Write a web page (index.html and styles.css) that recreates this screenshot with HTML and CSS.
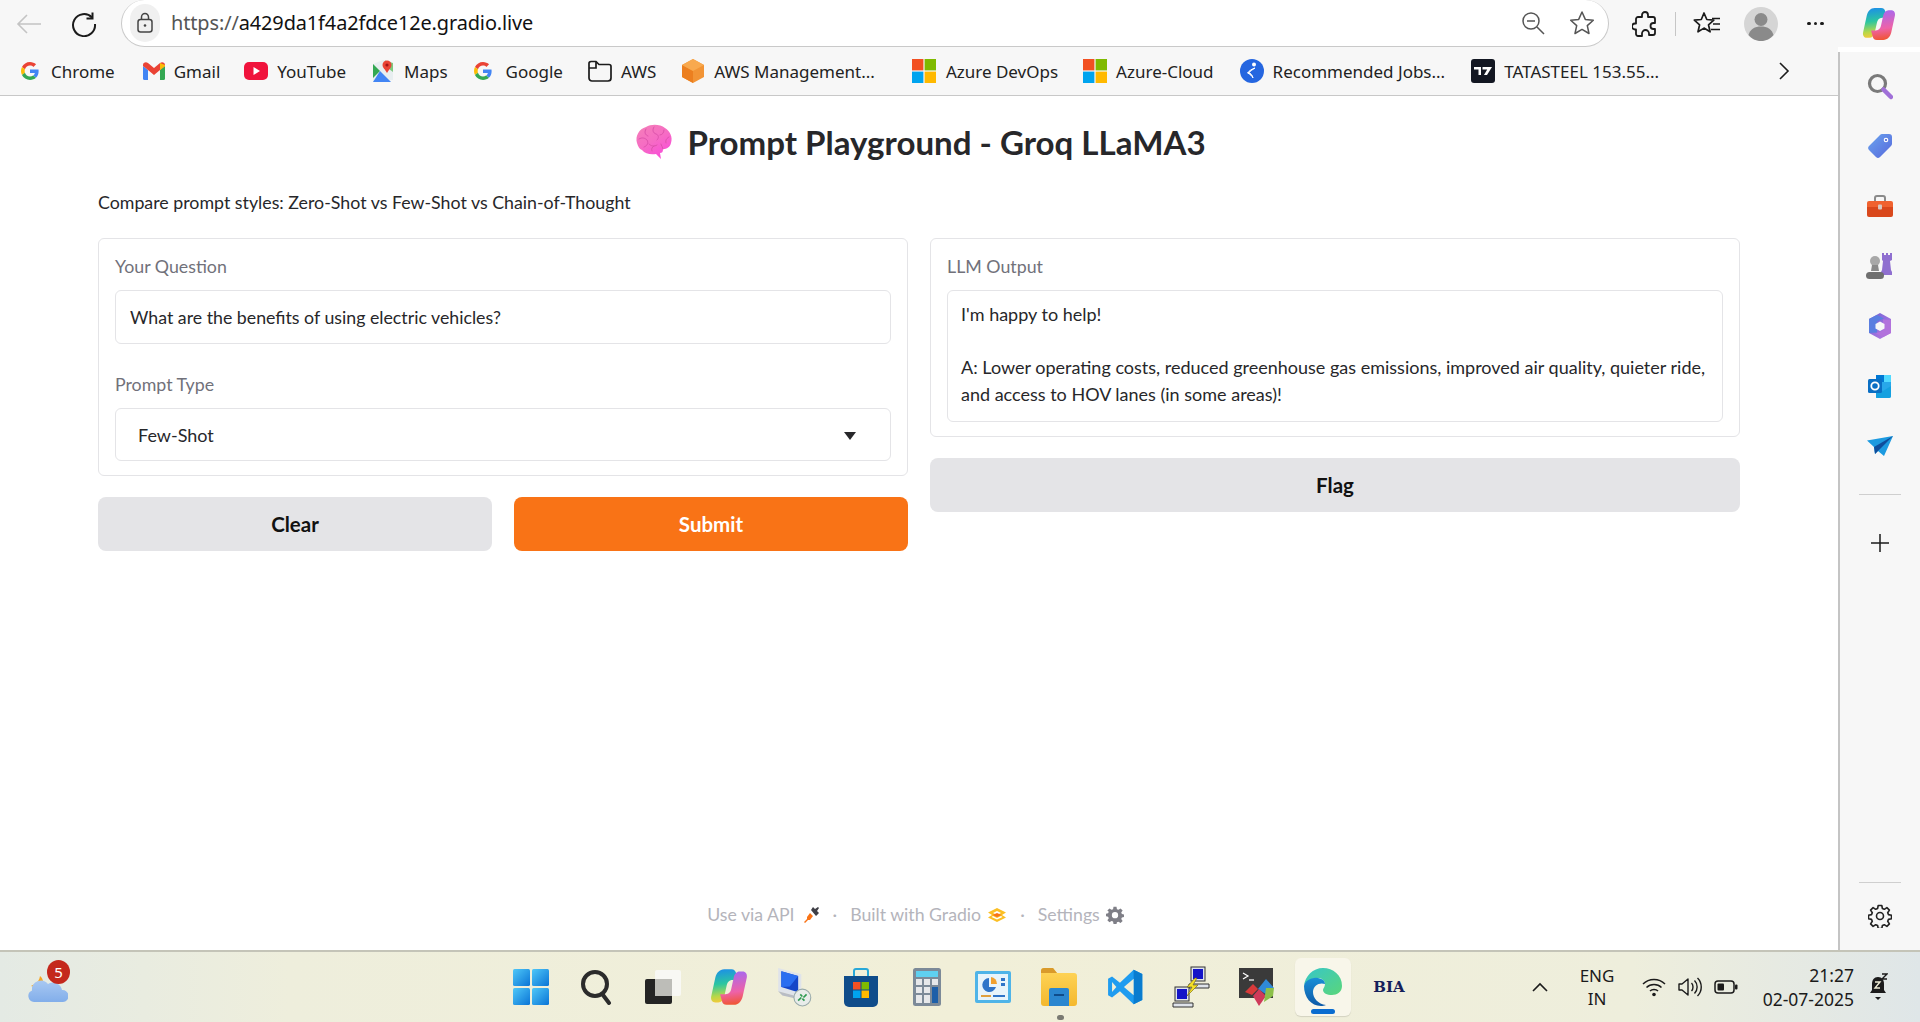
FILE: index.html
```
<!DOCTYPE html>
<html lang="en">
<head>
<meta charset="utf-8">
<title>Prompt Playground - Groq LLaMA3</title>
<link rel="stylesheet" href="styles.css">
</head>
<body>
<svg class="defs" width="0" height="0" aria-hidden="true">
  <defs>
    <symbol id="g-logo" viewBox="0 0 48 48">
      <path fill="#EA4335" d="M24 9.5c3.54 0 6.71 1.22 9.21 3.6l6.85-6.85C35.9 2.38 30.47 0 24 0 14.62 0 6.51 5.38 2.56 13.22l7.98 6.19C12.43 13.72 17.74 9.5 24 9.5z"/>
      <path fill="#4285F4" d="M46.98 24.55c0-1.57-.15-3.09-.38-4.55H24v9.02h12.94c-.58 2.96-2.26 5.48-4.78 7.18l7.73 6c4.51-4.18 7.09-10.36 7.09-17.65z"/>
      <path fill="#FBBC05" d="M10.53 28.59c-.48-1.45-.76-2.99-.76-4.59s.27-3.14.76-4.59l-7.98-6.19C.92 16.46 0 20.12 0 24c0 3.88.92 7.54 2.56 10.78l7.97-6.19z"/>
      <path fill="#34A853" d="M24 48c6.48 0 11.93-2.13 15.89-5.81l-7.73-6c-2.15 1.45-4.92 2.3-8.16 2.3-6.26 0-11.57-4.22-13.47-9.91l-7.98 6.19C6.51 42.62 14.62 48 24 48z"/>
    </symbol>
    <symbol id="ms-logo" viewBox="0 0 24 24">
      <rect x="0" y="0" width="11.4" height="11.4" fill="#f25022"/>
      <rect x="12.6" y="0" width="11.4" height="11.4" fill="#7fba00"/>
      <rect x="0" y="12.6" width="11.4" height="11.4" fill="#00a4ef"/>
      <rect x="12.6" y="12.6" width="11.4" height="11.4" fill="#ffb900"/>
    </symbol>
    <linearGradient id="cop-a" x1="0.3" y1="0" x2="0.4" y2="1">
      <stop offset="0" stop-color="#1c8fe8"/><stop offset=".45" stop-color="#2cc6a0"/><stop offset=".8" stop-color="#b8d848"/><stop offset="1" stop-color="#f7c93a"/>
    </linearGradient>
    <linearGradient id="cop-b" x1="0.3" y1="0" x2="0.4" y2="1">
      <stop offset="0" stop-color="#f0542a"/><stop offset=".4" stop-color="#ee62a8"/><stop offset="1" stop-color="#a868ee"/>
    </linearGradient>
    <symbol id="copilot" viewBox="0 0 32 32">
      <path fill="url(#cop-a)" d="M12 1h6c2.500 0 3.500 1.500 4 3.500L23.500 10H19c-3 0-4.500 2-5 5l-2 9c-.5 3-2.500 5-5 5H4.500C2 29 .5 27 1 24L4.500 8C5.500 4 8 1 12 1z"/>
      <path fill="url(#cop-b)" transform="rotate(180 16 16)" d="M12 1h6c2.500 0 3.500 1.500 4 3.500L23.500 10H19c-3 0-4.500 2-5 5l-2 9c-.5 3-2.500 5-5 5H4.500C2 29 .5 27 1 24L4.500 8C5.500 4 8 1 12 1z"/>
    </symbol>
    <linearGradient id="win" x1="0" y1="0" x2="1" y2="1">
      <stop offset="0" stop-color="#4fc8f8"/><stop offset="1" stop-color="#0a74d6"/>
    </linearGradient>
    <linearGradient id="brain" x1="0" y1="0" x2=".6" y2="1">
      <stop offset="0" stop-color="#f580b8"/><stop offset=".55" stop-color="#f66cc4"/><stop offset="1" stop-color="#f94fd8"/>
    </linearGradient>
    <linearGradient id="edge-a" x1="0" y1="0" x2="1" y2="1">
      <stop offset="0" stop-color="#37c6c9"/><stop offset="1" stop-color="#5ad67a"/>
    </linearGradient>
    <linearGradient id="edge-b" x1="0" y1="0" x2="0" y2="1">
      <stop offset="0" stop-color="#1a8fd6"/><stop offset="1" stop-color="#0d5aa8"/>
    </linearGradient>
    <linearGradient id="m365" x1="0" y1="0" x2="1" y2="1">
      <stop offset="0" stop-color="#6a62d8"/><stop offset="1" stop-color="#c07ae0"/>
    </linearGradient>
    <linearGradient id="tag" x1="0" y1="0" x2="1" y2="1">
      <stop offset="0" stop-color="#6aa4ee"/><stop offset="1" stop-color="#5668dc"/>
    </linearGradient>
    <linearGradient id="folder" x1="0" y1="0" x2="0" y2="1">
      <stop offset="0" stop-color="#ffd65a"/><stop offset="1" stop-color="#f4b82e"/>
    </linearGradient>
    <linearGradient id="cloud" x1="0" y1="0" x2="0" y2="1">
      <stop offset="0" stop-color="#a8c8f2"/><stop offset="1" stop-color="#82aeea"/>
    </linearGradient>
  </defs>
</svg>

<header class="toolbar">
  <svg class="ic-back" width="26" height="22" viewBox="0 0 26 22"><path d="M25 11H2M11 2l-9 9 9 9" fill="none" stroke="#c4c4c4" stroke-width="1.6"/></svg>
  <svg class="ic-reload" width="26" height="26" viewBox="0 0 26 26"><path d="M21 6.500A11 11 0 1 0 24 13" fill="none" stroke="#1b1b1b" stroke-width="2"/><path d="M21.500 1.500v6h-6" fill="none" stroke="#1b1b1b" stroke-width="2"/></svg>
  <div class="omnibox">
    <span class="lock">
      <svg width="18" height="22" viewBox="0 0 18 22"><rect x="2" y="7.500" width="14" height="12.500" rx="2.500" fill="none" stroke="#444" stroke-width="1.500"/><path d="M5.500 7.500V5a3.500 3.500 0 0 1 7 0v2.500" fill="none" stroke="#444" stroke-width="1.500"/><circle cx="9" cy="13.500" r="1.300" fill="#444"/></svg>
    </span>
    <span class="url"><span class="url-scheme">https://</span>a429da1f4a2fdce12e.gradio.live</span>
    <svg class="ic-zoom" width="24" height="24" viewBox="0 0 24 24"><circle cx="10" cy="10" r="8" fill="none" stroke="#555" stroke-width="1.500"/><path d="M16 16l7 7M6 10h8" stroke="#555" stroke-width="1.500"/></svg>
    <svg class="ic-star" width="26" height="26" viewBox="0 0 26 26"><path d="M13 2l3.300 7.400 8 .8-6 5.400 1.700 7.900-7-4.100-7 4.100 1.700-7.900-6-5.400 8-.8z" fill="none" stroke="#555" stroke-width="1.500" stroke-linejoin="round"/></svg>
  </div>
  <svg class="ic-ext" width="26" height="28" viewBox="0 0 26 28"><path d="M10 5a3 3 0 0 1 6 0v2h5a2 2 0 0 1 2 2v4h-1.500a3 3 0 0 0 0 6H23v4a2 2 0 0 1-2 2h-4v-1.500a3.500 3.500 0 0 0-7 0V26H6a2 2 0 0 1-2-2v-4.500H3a3 3 0 0 1 0-6h1V9a2 2 0 0 1 2-2h4z" fill="none" stroke="#1b1b1b" stroke-width="1.800" stroke-linejoin="round"/></svg>
  <span class="tb-divider"></span>
  <svg class="ic-favs" width="28" height="26" viewBox="0 0 28 26"><path d="M11 2l2.800 6.500 7 .6-5.300 4.700 1.600 7-6.100-3.700L5 20.800l1.600-7L1.300 9.100l7-.6z" fill="none" stroke="#1b1b1b" stroke-width="1.700" stroke-linejoin="round"/><path d="M19 7.500h8M20 13h7M18 18.500h9" stroke="#1b1b1b" stroke-width="1.700"/></svg>
  <span class="avatar">
    <svg width="34" height="34" viewBox="0 0 34 34"><circle cx="17" cy="17" r="17" fill="#d5d5d5"/><circle cx="17" cy="12.500" r="6.500" fill="#8a8a8a"/><path d="M4.500 28c1.500-6 6.500-8.500 12.500-8.500S28 22 29.500 28c-3 3.800-7.500 6-12.500 6s-9.500-2.200-12.500-6z" fill="#8a8a8a"/></svg>
  </span>
  <span class="dots"><i></i><i></i><i></i></span>
  <svg class="ic-copilot" width="34" height="34"><use href="#copilot"/></svg>
</header>

<div class="workspace">
  <div class="browser-main">
    <nav class="bookmarks">
      <a class="bm bm-chrome"><svg width="18" height="18"><use href="#g-logo"/></svg>Chrome</a>
      <a class="bm bm-gmail"><svg width="24" height="18" viewBox="0 0 24 18"><path d="M1 4v12.500A1.500 1.500 0 0 0 2.500 18H6V8z" fill="#4285f4"/><path d="M23 4v12.500a1.500 1.500 0 0 1-1.500 1.500H18V8z" fill="#34a853"/><path d="M1 3c0-2.500 3-3.500 5-2l6 5 6-5c2-1.500 5-.5 5 2v1l-5 4-6 5-6-5-5-4z" fill="#ea4335"/><path d="M18 1l5 2v1l-5 4z" fill="#fbbc05"/></svg>Gmail</a>
      <a class="bm bm-yt"><svg width="24" height="18" viewBox="0 0 24 18"><rect width="24" height="18" rx="5" fill="#f0133c"/><path d="M9.500 5l6.500 4-6.500 4z" fill="#fff"/></svg>YouTube</a>
      <a class="bm bm-maps"><svg width="24" height="24" viewBox="0 0 24 24"><path d="M2 5l10-4 10 3v17l-20 2z" fill="#e8eef0"/><path d="M2 5l7 7-7 7z" fill="#34a853"/><path d="M9 12l-7 11h18z" fill="#4285f4"/><path d="M14 1.500l8 2.500v9l-8-6z" fill="#7fc97f"/><circle cx="16" cy="6" r="4.500" fill="#ea4335"/><path d="M12.500 8.500L16 14l3.500-5.500z" fill="#ea4335"/><circle cx="16" cy="6" r="1.600" fill="#a31515"/></svg>Maps</a>
      <a class="bm bm-google"><svg width="18" height="18"><use href="#g-logo"/></svg>Google</a>
      <a class="bm bm-aws"><svg width="24" height="22" viewBox="0 0 24 22"><path d="M1 18V3.500A2 2 0 0 1 3 1.500h5l3 3h10a2 2 0 0 1 2 2V18a3 3 0 0 1-3 3H4a3 3 0 0 1-3-3zM8 1.500V8H1" fill="none" stroke="#1b1b1b" stroke-width="1.700"/></svg>AWS</a>
      <a class="bm bm-mgmt"><svg width="24" height="26" viewBox="0 0 24 26"><path d="M12 1l11 6v12l-11 6-11-6V7z" fill="#f29435"/><path d="M12 13v12l-11-6V7z" fill="#ec7f1f"/><path d="M12 1l11 6-11 6L1 7z" fill="#f8a94e"/></svg>AWS Management...</a>
      <a class="bm bm-devops"><svg width="24" height="24"><use href="#ms-logo"/></svg>Azure DevOps</a>
      <a class="bm bm-cloud"><svg width="24" height="24"><use href="#ms-logo"/></svg>Azure-Cloud</a>
      <a class="bm bm-jobs"><svg width="24" height="24" viewBox="0 0 24 24"><circle cx="12" cy="12" r="12" fill="#2566e0"/><circle cx="14" cy="5.500" r="2" fill="#fff"/><path d="M15 9c-2 1.500-5 3-6 4.500 1.500 1 3.500 2.500 4 5.500-1-2-3-4-5.500-5 1.500-2 4-4 7.500-5z" fill="#fff" stroke="#fff"/></svg>Recommended Jobs...</a>
      <a class="bm bm-tata"><svg width="24" height="24" viewBox="0 0 24 24"><rect width="24" height="24" rx="3" fill="#131722"/><path d="M3 8h7v8H7.500v-5.500H3zM11.500 8h9.500l-5 8h-3l3.200-5.500h-4.700z" fill="#fff"/></svg>TATASTEEL 153.55...</a>
      <svg class="bm-more" width="12" height="20" viewBox="0 0 12 20"><path d="M2 2l8 8-8 8" fill="none" stroke="#1b1b1b" stroke-width="1.600"/></svg>
    </nav>

    <main class="page">
      <div class="app">
        <h1 class="title">
          <svg width="38" height="36" viewBox="0 0 38 36"><path d="M2 19C0 12 4 5 11 3c5-3 14-3 19 1 5 3 8 9 6 15-1 4-4 6-8 6 0 3-1 4-3 4l1 6-5-5c-5 1-11 0-14-4-3-1-4-4-5-7z" fill="url(#brain)"/><path d="M11 5c-2 3-1 6 2 7M19 3c-2 3-1 6 2 7s3 4 1 6M29 6c0 3-2 5-4 5M34 13c-2 1-4 3-3 6M4 15c3-2 6-1 8 1 2 3 0 6-3 7M14 20c2 2 5 3 8 1M17 27c-1-2 0-4 2-5M26 20c1 2 1 3 2 5" fill="none" stroke="#d950a8" stroke-width=".9" stroke-linecap="round"/></svg>
          <span>Prompt Playground - Groq LLaMA3</span>
        </h1>
        <p class="subtitle">Compare prompt styles: Zero-Shot vs Few-Shot vs Chain-of-Thought</p>

        <div class="columns">
          <section class="col">
            <div class="card">
              <div class="field">
                <label class="label">Your Question</label>
                <div class="box box-input">What are the benefits of using electric vehicles?</div>
              </div>
              <div class="field">
                <label class="label">Prompt Type</label>
                <div class="box box-select">
                  <span>Few-Shot</span>
                  <svg width="12" height="8" viewBox="0 0 12 8"><path d="M0 0h12L6 8z" fill="#27272a"/></svg>
                </div>
              </div>
            </div>
            <div class="btn-row">
              <button class="btn">Clear</button>
              <button class="btn btn-primary">Submit</button>
            </div>
          </section>

          <section class="col">
            <div class="card">
              <div class="field">
                <label class="label">LLM Output</label>
                <div class="box box-output">I'm happy to help!<br><br>A: Lower operating costs, reduced greenhouse gas emissions, improved air quality, quieter ride, and access to HOV lanes (in some areas)!</div>
              </div>
            </div>
            <button class="btn">Flag</button>
          </section>
        </div>
      </div>

      <footer class="page-footer">
        <span>Use via API</span>
        <svg class="foot-plug" width="16" height="17" viewBox="0 0 16 17"><path d="M9 1l2 2 3-2 1 1-2 3 2 2-3 3-5-6z" fill="#3f3f46"/><path d="M6 7l3 3-3 4-2 0-3 3-1-1 3-3 0-2z" fill="#f97316"/></svg>
        <i class="sep">·</i>
        <span>Built with Gradio</span>
        <svg class="foot-logo" width="20" height="16" viewBox="0 0 20 16"><path d="M10 1L19 5.500 15 8l4 2.500L10 15 1 10.500 5 8 1 5.500z" fill="#fbbf24"/><path d="M10 4L14 6 10 8 6 6zM6 9l4 2 4-2 1.500 1L10 12.500 4.500 10z" fill="#fff"/><path d="M10 6L14.500 8 10 10 5.500 8z" fill="#f97316"/></svg>
        <i class="sep">·</i>
        <span>Settings</span>
        <svg class="foot-logo" width="18" height="18" viewBox="0 0 24 24"><path fill="#7f7f87" fill-rule="evenodd" d="M10 1h4l.6 3.200 2 .9L19.400 3.200l2.800 2.800-1.900 2.800.9 2 3.200.6v3.200l-3.200.6-.9 2 1.900 2.800-2.800 2.800-2.800-1.900-2 .9L14 24h-4l-.6-3.200-2-.9-2.800 1.900-2.800-2.800 1.900-2.800-.9-2-3.200-.6v-3.200l3.200-.6.9-2L1.800 6 4.600 3.200l2.800 1.900 2-.9zM12 8a4.200 4.200 0 1 0 0 8.400A4.200 4.200 0 0 0 12 8z"/></svg>
      </footer>
    </main>
  </div>

  <aside class="sidebar">
    <div class="side-top">
      <svg width="26" height="26" viewBox="0 0 26 26"><circle cx="10.500" cy="10.500" r="8" fill="none" stroke="#7a7a7a" stroke-width="3.200"/><path d="M16.500 16.500L24 24" stroke="#a070d8" stroke-width="4.500" stroke-linecap="round"/></svg>
      <svg width="24" height="24" viewBox="0 0 24 24"><path d="M14 0h7a3 3 0 0 1 3 3v7a3 3 0 0 1-1 2L12 23a3 3 0 0 1-4 0L1 16a3 3 0 0 1 0-4L12 1a3 3 0 0 1 2-1z" fill="url(#tag)"/><circle cx="18" cy="6" r="2.300" fill="#fff"/><circle cx="18" cy="6" r="1.100" fill="#4a5fd0"/></svg>
      <svg width="28" height="22" viewBox="0 0 28 22"><path d="M9 6V3a2 2 0 0 1 2-2h6a2 2 0 0 1 2 2v3" fill="none" stroke="#8a8a8a" stroke-width="2"/><path d="M1 8a2 2 0 0 1 2-2h22a2 2 0 0 1 2 2v4H1z" fill="#f0622f"/><path d="M1 12h26v8a2 2 0 0 1-2 2H3a2 2 0 0 1-2-2z" fill="#d9481c"/><rect x="12" y="9.500" width="4" height="5" rx="1" fill="#d8c8c0"/></svg>
      <svg width="28" height="28" viewBox="0 0 28 28"><path d="M16 1h2v2h2V1h2v2h2V1h2v7l-2 1 1 9 1 2v3H15v-3l1-2 1-9-1-1z" fill="#8f6fd0"/><circle cx="9" cy="9" r="5" fill="#a8a8a8"/><path d="M6 13h6l1 6H5z" fill="#8a8a8a"/><rect x="0" y="20" width="18" height="7" rx="3.500" fill="#6f6f6f"/></svg>
      <svg width="24" height="26" viewBox="0 0 24 26"><path d="M12 0l11 6v14l-11 6-11-6V6z" fill="url(#m365)"/><path d="M1 6l8-4 7 3.500-7 3v11L1 20z" fill="#5a7ee0"/><path d="M23 20l-8 4-7-3.500 7-3v-11l8 .5z" fill="#b272dc"/><path d="M12 8.500l4.500 2.500v4.500L12 18l-4.500-2.500V11z" fill="#f7f7f7"/></svg>
      <svg width="24" height="24" viewBox="0 0 24 24"><path d="M8 1h13a2 2 0 0 1 2 2v19a2 2 0 0 1-2 2H8z" fill="#28a8ea"/><path d="M8 1h8v7H8z" fill="#0078d4"/><path d="M16 1h7v7h-7z" fill="#50d9ff"/><path d="M8 13l7 4 8-5v10a2 2 0 0 1-2 2H10a2 2 0 0 1-2-2z" fill="#14a0e0"/><rect y="5" width="14" height="14" rx="1.500" fill="#0a6fc4"/><circle cx="7" cy="12" r="3.700" fill="none" stroke="#fff" stroke-width="1.800"/></svg>
      <svg width="26" height="20" viewBox="0 0 26 20"><path d="M0 4.500L26 0 17 20l-6-5-3 3-1-7z" fill="#1c9ae0"/><path d="M26 0L7 11l1 7 3-3z" fill="#0e4e9c"/></svg>
      <span class="side-sep"></span>
      <svg class="side-plus" width="18" height="18" viewBox="0 0 18 18"><path d="M9 0v18M0 9h18" stroke="#1b1b1b" stroke-width="1.500"/></svg>
    </div>
    <div class="side-bottom">
      <span class="side-sep"></span>
      <svg width="24" height="24" viewBox="0 0 24 24"><path fill="none" stroke="#222" stroke-width="1.600" stroke-linejoin="round" d="M10.200 1.500h3.600l.6 3 1.900.8 2.600-1.700 2.500 2.500-1.700 2.600.8 1.900 3 .6v3.600l-3 .6-.8 1.900 1.700 2.600-2.500 2.500-2.600-1.700-1.900.8-.6 3h-3.600l-.6-3-1.900-.8-2.600 1.700-2.500-2.500 1.700-2.600-.8-1.900-3-.6v-3.600l3-.6.800-1.900-1.700-2.600 2.500-2.500 2.600 1.700 1.900-.8z"/><circle cx="12" cy="12" r="3.500" fill="none" stroke="#222" stroke-width="1.600"/></svg>
    </div>
  </aside>
</div>

<div class="taskbar">
  <div class="weather">
    <svg width="40" height="36" viewBox="0 0 40 36"><path d="M3 17c2-1 8-3 9-10 4 3 4 9 1 13z" fill="#f5a623"/><path d="M6 33a6 6 0 0 1-2-11.500A9 9 0 0 1 20 15a9 9 0 0 1 14 6 6 6 0 0 1 1 12z" fill="url(#cloud)"/></svg>
    <span class="badge">5</span>
  </div>
  <div class="apps">
    <span class="app-ic"><svg width="36" height="36" viewBox="0 0 36 36"><rect width="17" height="17" rx="1.500" fill="url(#win)"/><rect x="19" width="17" height="17" rx="1.500" fill="url(#win)"/><rect y="19" width="17" height="17" rx="1.500" fill="url(#win)"/><rect x="19" y="19" width="17" height="17" rx="1.500" fill="url(#win)"/></svg></span>
    <span class="app-ic"><svg width="34" height="36" viewBox="0 0 34 36"><circle cx="15" cy="15" r="12" fill="none" stroke="#2b2b2b" stroke-width="4"/><path d="M23 26l6 8" stroke="#2b2b2b" stroke-width="4" stroke-linecap="round"/></svg></span>
    <span class="app-ic"><svg width="36" height="36" viewBox="0 0 36 36"><rect x="10" y="1" width="26" height="26" rx="2" fill="#f8f8f4"/><rect x="0" y="10" width="27" height="25" rx="2" fill="#242424"/><rect x="10" y="10" width="17" height="17" fill="#bdbdb8"/></svg></span>
    <span class="app-ic"><svg width="38" height="38"><use href="#copilot"/></svg></span>
    <span class="app-ic"><svg width="38" height="40" viewBox="0 0 36 38"><path d="M2 1l22 6v22L2 23z" fill="#dfe3ea"/><path d="M5 4l16 4.500V24L5 19z" fill="#1646c8"/><path d="M5 4l16 4.500-8 10L5 19z" fill="#2b6ef0"/><path d="M2 23l22 6 4 3-22-5z" fill="#b8bcc4"/><circle cx="25" cy="29" r="8" fill="#e8ecea" stroke="#9aa" stroke-width="1"/><path d="M21 32l3-3M29 26l-3 3M23 26l2 2M27 32l-2-2" stroke="#2d9a50" stroke-width="1.600"/></svg></span>
    <span class="app-ic"><svg width="34" height="40" viewBox="0 0 34 40"><path d="M10 10V4a2 2 0 0 1 2-2h10a2 2 0 0 1 2 2v6" fill="none" stroke="#28a8d8" stroke-width="2"/><path d="M0 9h34v26a5 5 0 0 1-5 5H5a5 5 0 0 1-5-5z" fill="#0f4c8a"/><rect x="9" y="15" width="7.500" height="7.500" fill="#f25022"/><rect x="17.500" y="15" width="7.500" height="7.500" fill="#7fba00"/><rect x="9" y="23.500" width="7.500" height="7.500" fill="#00a4ef"/><rect x="17.500" y="23.500" width="7.500" height="7.500" fill="#ffb900"/></svg></span>
    <span class="app-ic"><svg width="28" height="38" viewBox="0 0 28 38"><rect width="28" height="38" rx="2.500" fill="#7c8a98"/><rect x="3" y="3" width="22" height="6" fill="#5fd0f0"/><rect x="3" y="11" width="6" height="6" fill="#e6e8ea"/><rect x="11" y="11" width="6" height="6" fill="#e6e8ea"/><rect x="19" y="11" width="6" height="6" fill="#e6e8ea"/><rect x="3" y="19" width="6" height="6" fill="#e6e8ea"/><rect x="11" y="19" width="6" height="6" fill="#e6e8ea"/><rect x="19" y="19" width="6" height="16" fill="#1d5fa8"/><rect x="3" y="27" width="6" height="8" fill="#e6e8ea"/><rect x="11" y="27" width="6" height="8" fill="#e6e8ea"/></svg></span>
    <span class="app-ic"><svg width="36" height="32" viewBox="0 0 36 32"><rect width="36" height="32" rx="2" fill="#4fb4e8"/><rect x="3" y="3" width="30" height="26" fill="#e8f4fb"/><path d="M14 7a7 7 0 1 0 7 9h-7z" fill="#2f74c8"/><path d="M16 6a7 7 0 0 1 6 7h-6z" fill="#f0a030"/><rect x="26" y="7" width="4" height="3" fill="#2f74c8"/><rect x="26" y="12" width="4" height="3" fill="#2f74c8"/><rect x="6" y="24" width="10" height="2" fill="#e0a040"/><rect x="18" y="24" width="12" height="2" fill="#2f74c8"/></svg></span>
    <span class="app-ic app-ic-dot"><svg width="36" height="38" viewBox="0 0 36 38"><path d="M0 3a3 3 0 0 1 3-3h9l4 5h17a3 3 0 0 1 3 3v27a3 3 0 0 1-3 3H3a3 3 0 0 1-3-3z" fill="url(#folder)"/><path d="M0 3a3 3 0 0 1 3-3h9l4 5H0z" fill="#d99a2b"/><path d="M8 22a2 2 0 0 1 2-2h16a2 2 0 0 1 2 2v16H8z" fill="#2a86cf"/><rect x="13" y="26" width="10" height="2" fill="#0f4c8a"/></svg></span>
    <span class="app-ic"><svg width="36" height="36" viewBox="0 0 100 100"><path d="M74 2l24 12v72L74 98 36 62 14 79 3 73V27l11-6 22 17z" fill="#1f9cf0"/><path d="M74 2l24 12v72L74 98z" fill="#0a7ccf"/><path d="M74 27L47 50l27 23z" fill="#f1efd8"/><path d="M14 36v28l12-14z" fill="#f1efd8"/></svg></span>
    <span class="app-ic"><svg width="38" height="42" viewBox="0 0 38 42"><rect x="19" y="1" width="14" height="14" fill="#dfe3ea" stroke="#333"/><rect x="21" y="3" width="10" height="10" fill="#1414c8"/><path d="M17 18h20v4H17z" fill="#dfe3ea" stroke="#333"/><rect x="3" y="21" width="14" height="14" fill="#dfe3ea" stroke="#333"/><rect x="5" y="23" width="10" height="10" fill="#1414c8"/><path d="M1 37h20v4H1z" fill="#dfe3ea" stroke="#333"/><path d="M23 12l-8 9h5l-5 9 11-11h-5l4-7z" fill="#f5e028" stroke="#6a6010" stroke-width=".6"/></svg></span>
    <span class="app-ic"><svg width="36" height="38" viewBox="0 0 36 38"><rect width="34" height="30" fill="#3a3a3a"/><path d="M4 5l5 3-5 3" fill="none" stroke="#fff" stroke-width="1.200"/><path d="M10 12h5" stroke="#fff" stroke-width="1.200"/><path d="M6 24l8-8 5 5-6 6z" fill="#d83a3a"/><path d="M19 21l8-10 8 9-7 7z" fill="#2f8ad8"/><path d="M14 28l6-7 7 7-7 10z" fill="#cf3a5a"/><path d="M27 20l8 0-1 8-9 6z" fill="#8cc04a"/></svg></span>
    <span class="app-ic app-ic-active"><svg width="38" height="38" viewBox="0 0 38 38"><path d="M19 0C29 0 38 7 38 18c0 6-5 9-10 9-5 0-9-2-9-5 0-2 2-3 2-6s-3-6-7-6C7 10 1 14 0 18 1 8 9 0 19 0z" fill="url(#edge-a)"/><path d="M0 18c1-5 7-9 14-8 5 1 7 3 7 6-5-2-12 1-12 8 0 6 5 12 13 13-2 .7-3 1-5 1C7 38 0 29 0 18z" fill="url(#edge-b)"/></svg></span>
    <span class="app-ic app-ic-bia">BIA</span>
  </div>
  <div class="tray">
    <svg class="tray-up" width="16" height="10" viewBox="0 0 16 10"><path d="M1 9l7-7 7 7" fill="none" stroke="#1b1b1b" stroke-width="1.600"/></svg>
    <div class="lang"><span>ENG</span><span>IN</span></div>
    <svg class="tray-wifi" width="24" height="20" viewBox="0 0 24 20"><path d="M1 7c6-6 16-6 22 0M4.500 10.500c4-4 11-4 15 0M8 14c2-2 6-2 8 0" fill="none" stroke="#1b1b1b" stroke-width="1.500"/><circle cx="12" cy="17.500" r="1.800" fill="#1b1b1b"/></svg>
    <svg class="tray-vol" width="24" height="22" viewBox="0 0 24 22"><path d="M1 8v6h3l6 5V3L4 8z" fill="none" stroke="#1b1b1b" stroke-width="1.400" stroke-linejoin="round"/><path d="M13.500 7c2 2 2 6 0 8M16.500 4.500c3.500 3.500 3.500 9.500 0 13M19.500 2c5 5 5 13 0 18" fill="none" stroke="#1b1b1b" stroke-width="1.400"/></svg>
    <svg class="tray-batt" width="24" height="14" viewBox="0 0 24 14"><rect x="1" y="1" width="19" height="12" rx="3" fill="none" stroke="#1b1b1b" stroke-width="1.500"/><rect x="3.500" y="3.500" width="6.500" height="7" rx="1" fill="#1b1b1b"/><rect x="21" y="4.500" width="2.500" height="5" rx="1" fill="#1b1b1b"/></svg>
    <div class="clock"><span>21:27</span><span>02-07-2025</span></div>
    <svg class="tray-bell" width="20" height="28" viewBox="0 0 20 28"><path d="M10 4c-4 0-6 3-6 7v6l-2 3h16l-2-3v-6c0-4-2-7-6-7z" fill="#1b1b1b"/><path d="M7 24h6l-3 3z" fill="#1b1b1b"/><path d="M7 9h5l-5 6h5" fill="none" stroke="#f1efd8" stroke-width="1.400"/><path d="M14 1h5l-5 5h5" fill="none" stroke="#1b1b1b" stroke-width="1.400"/></svg>
  </div>
</div>
</body>
</html>
```

FILE: styles.css
```
* { box-sizing: border-box; }

html, body {
  margin: 0;
  padding: 0;
  width: 1920px;
  height: 1022px;
  overflow: hidden;
  background: #fff;
}

body {
  display: flex;
  flex-direction: column;
  font-family: "Lato", "Liberation Sans", sans-serif;
  color: #27272a;
}

.defs { display: block; height: 0; flex: none; }

/* Browser toolbar */
.toolbar {
  flex: none;
  height: 47px;
  display: flex;
  align-items: center;
  background: #f7f7f7;
  padding-left: 16px;
}
.toolbar > svg { flex: none; }
.ic-reload { margin-left: 29px; }
.omnibox {
  width: 1488px;
  height: 47px;
  margin-left: 24px;
  margin-top: -1px;
  padding: 0 10px 0 8px;
  display: flex;
  align-items: center;
  background: #fff;
  border: 1px solid #c9c9c9;
  border-top: none;
  border-radius: 24px;
  font-family: "Noto Sans", "Liberation Sans", sans-serif;
}
.lock {
  width: 30px;
  height: 38px;
  border-radius: 15px;
  background: #f0f0f0;
  display: flex;
  align-items: center;
  justify-content: center;
  flex: none;
}
.url {
  margin-left: 11px;
  font-size: 19.900px;
  color: #111;
  letter-spacing: -0.100px;
}
.url-scheme { color: #555; }
.ic-zoom { margin-left: auto; }
.ic-star { margin-left: 24px; margin-right: 3px; }
.ic-ext { margin-left: 23px; }
.tb-divider { width: 1px; height: 24px; background: #c6c6c6; margin-left: 17px; flex: none; }
.ic-favs { margin-left: 17px; }
.avatar { margin-left: 23px; display: flex; flex: none; }
.dots { margin-left: 29px; display: flex; gap: 3px; flex: none; }
.dots i { width: 3.500px; height: 3.500px; border-radius: 50%; background: #1b1b1b; }
.ic-copilot { margin-left: 38px; }

/* Workspace */
.workspace {
  flex: 1;
  min-height: 0;
  display: flex;
}
.browser-main {
  flex: 1;
  min-width: 0;
  display: flex;
  flex-direction: column;
}

/* Bookmarks */
.bookmarks {
  flex: none;
  height: 49px;
  background: #f7f7f7;
  border-bottom: 1px solid #c8c8c8;
  display: flex;
  align-items: center;
  padding-left: 21px;
  font-family: "Noto Sans", "Liberation Sans", sans-serif;
  font-size: 17px;
  color: #222;
}
.bm {
  display: flex;
  align-items: center;
  gap: 12px;
  flex: none;
  white-space: nowrap;
}
.bm svg { flex: none; }
.bm-gmail { margin-left: 27px; gap: 8px; }
.bm-yt { margin-left: 24px; gap: 9px; }
.bm-maps { margin-left: 25px; gap: 9px; }
.bm-google { margin-left: 26px; gap: 14px; }
.bm-aws { margin-left: 25px; gap: 9px; }
.bm-mgmt { margin-left: 25px; gap: 9px; }
.bm-devops { margin-left: 37px; gap: 10px; }
.bm-cloud { margin-left: 25px; gap: 9px; }
.bm-jobs { margin-left: 26px; gap: 9px; }
.bm-tata { margin-left: 26px; gap: 9px; }
.bm-more { margin-left: auto; margin-right: 48px; flex: none; }

/* Page */
.page {
  flex: 1;
  min-height: 0;
  background: #fff;
  display: flex;
  flex-direction: column;
}
.app {
  flex: 1;
  padding: 0 98px;
}
.title {
  margin: 26px 0 0;
  padding-left: 3px;
  height: 40px;
  display: flex;
  align-items: center;
  justify-content: center;
  gap: 14px;
  font-size: 33.100px;
  line-height: 40px;
  font-weight: 700;
  color: #27272a;
}
.subtitle {
  margin: 28px 0 0;
  font-size: 17.800px;
  line-height: 24px;
  color: #27272a;
}
.columns {
  margin-top: 24px;
  display: grid;
  grid-template-columns: 810px 810px;
  column-gap: 22px;
  align-items: start;
}
.col {
  display: flex;
  flex-direction: column;
  gap: 21px;
}
.card {
  border: 1px solid #e4e4e7;
  border-radius: 6px;
  padding: 16px 16px 14px;
  display: flex;
  flex-direction: column;
  gap: 29px;
  background: #fff;
}
.label {
  display: block;
  height: 26px;
  line-height: 23px;
  margin-bottom: 9px;
  font-size: 17.800px;
  color: #71717a;
}
.box {
  border: 1px solid #e4e4e7;
  border-radius: 6px;
  font-size: 18px;
  color: #27272a;
}
.box-input {
  height: 54px;
  line-height: 52px;
  padding: 0 14px;
  font-size: 17.750px;
}
.box-select {
  height: 53px;
  padding: 0 34px 0 22px;
  display: flex;
  align-items: center;
  justify-content: space-between;
}
.box-select svg { margin-top: 3px; }
.box-output {
  height: 132px;
  padding: 10px 13px;
  line-height: 26.600px;
}
.btn-row {
  display: grid;
  grid-template-columns: 1fr 1fr;
  column-gap: 22px;
}
.btn {
  height: 54px;
  border: none;
  border-radius: 8px;
  background: #e4e4e7;
  color: #111;
  font-family: inherit;
  font-size: 20.500px;
  font-weight: 700;
}
.btn-primary {
  background: #f97316;
  color: #fff;
}
.page-footer {
  flex: none;
  height: 68px;
  padding: 0 7px 3px 0;
  display: flex;
  align-items: center;
  justify-content: center;
  font-size: 17.700px;
  color: #b4b4bb;
}
.foot-plug { margin-left: 9px; }
.foot-logo { margin-left: 6px; }
.sep {
  font-style: normal;
  margin: 0 13px;
}

/* Side panel */
.sidebar {
  flex: none;
  width: 82px;
  margin-top: 5px;
  background: #f7f7f7;
  border-left: 2px solid #c4c4c4;
  display: flex;
  flex-direction: column;
  align-items: center;
  justify-content: space-between;
}
.side-top {
  display: flex;
  flex-direction: column;
  align-items: center;
  width: 100%;
  padding-top: 4px;
}
.side-top > svg { flex: none; height: 60px; }
.side-sep {
  display: block;
  width: 42px;
  height: 1px;
  background: #cfcfcf;
}
.side-top .side-sep { margin-top: 18px; margin-bottom: 39px; }
.side-top > .side-plus { height: 18px; }
.side-bottom {
  display: flex;
  flex-direction: column;
  align-items: center;
  gap: 21px;
  padding-bottom: 22px;
}

/* Taskbar */
.taskbar {
  flex: none;
  height: 72px;
  position: relative;
  display: flex;
  align-items: center;
  border-top: 2px solid #c4c4b8;
  background: linear-gradient(90deg, #e4eae4 0%, #eeeedc 15%, #f1efd8 50%, #eeeedc 85%, #dfe6e8 100%);
}
.weather {
  position: relative;
  width: 40px;
  height: 36px;
  margin-left: 28px;
  flex: none;
}
.badge {
  position: absolute;
  top: -9px;
  left: 19px;
  width: 23px;
  height: 24px;
  border-radius: 50%;
  background: #c4281c;
  color: #fff;
  font-size: 15px;
  line-height: 24px;
  text-align: center;
  font-family: "Noto Sans", sans-serif;
}
.apps {
  display: flex;
  align-items: center;
  margin-left: 430px;
  flex: none;
}
.app-ic {
  position: relative;
  width: 66px;
  height: 58px;
  display: flex;
  align-items: center;
  justify-content: center;
  flex: none;
}
.app-ic-dot::after {
  content: "";
  position: absolute;
  left: 31px;
  bottom: -4px;
  width: 7px;
  height: 5px;
  border-radius: 3px;
  background: #7a7a72;
}
.app-ic-active::before {
  content: "";
  position: absolute;
  inset: 0 5px;
  border-radius: 6px;
  background: #f8f6ea;
  box-shadow: 0 1px 1px rgba(0,0,0,.12);
}
.app-ic-active svg { position: relative; }
.app-ic-active::after {
  content: "";
  position: absolute;
  left: 21px;
  bottom: 2px;
  width: 24px;
  height: 5px;
  border-radius: 3px;
  background: #0a6cd0;
}
.app-ic-bia {
  font-family: "DejaVu Serif", "Liberation Serif", serif;
  font-weight: 700;
  font-size: 15px;
  color: #15205a;
}
.tray {
  flex: 1;
  display: flex;
  align-items: center;
  min-width: 0;
  font-family: "Noto Sans", "Liberation Sans", sans-serif;
  font-size: 17px;
  color: #1b1b1b;
}
.tray svg { flex: none; }
.tray-up { margin-left: 110px; }
.lang {
  display: flex;
  flex-direction: column;
  align-items: center;
  width: 40px;
  margin-left: 29px;
  line-height: 23px;
}
.tray-wifi { margin-left: 25px; }
.tray-vol { margin-left: 12px; }
.tray-batt { margin-left: 12px; }
.clock {
  display: flex;
  flex-direction: column;
  align-items: flex-end;
  margin-left: auto;
  line-height: 24px;
  font-size: 17.500px;
}
.tray-bell { margin-left: 14px; margin-right: 32px; }
```
